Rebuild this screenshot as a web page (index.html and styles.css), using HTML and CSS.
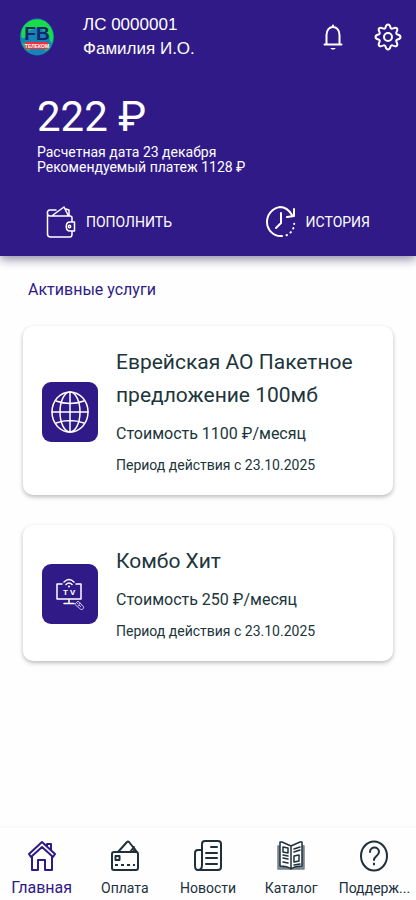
FILE: index.html
```html
<!DOCTYPE html>
<html lang="ru">
<head>
<meta charset="utf-8">
<meta name="viewport" content="width=device-width, initial-scale=1">
<title>Личный кабинет</title>
<link rel="stylesheet" href="styles.css">
</head>
<body>
<header class="header">
  <div class="topbar">
    <svg class="logo" viewBox="0 0 36 38" role="img" aria-label="ФБ Телеком">
      <ellipse cx="18" cy="19" rx="17" ry="18.500" fill="#1684b4"/>
      <path d="M8 5C13 0 25 0 30 7c5 7 5 13 3 18-3-1-2-6-4-9-4-1-5-6-9-7-4 0-5 3-9 3-2 4-4 9-8 8C1 15 3 9 8 5Z" fill="#16dd48"/>
      <path d="M3 25c5 0 7 3 8 8-4-1-7-4-8-8Zm22 8c1-3 4-4 7-5-1 3-4 5-7 5Z" fill="#28b66b"/>
      <text class="logo-letters" x="18" y="22" text-anchor="middle">FB</text>
      <rect x="6" y="24" width="23" height="7" rx="2" fill="#ef3038"/>
      <text class="logo-label" x="18" y="30" text-anchor="middle">ТЕЛЕКОМ</text>
    </svg>
    <div class="account">
      <div>ЛС 0000001</div>
      <div>Фамилия И.О.</div>
    </div>
    <button class="icon-button" type="button" aria-label="Уведомления">
      <svg class="bell" viewBox="2 0 20 28">
        <path d="M5.500 21V12c0-5 3-8 6.500-8s6.500 3 6.500 8v9M3.500 21.500h17M12 4V2.500"/>
        <path d="M9.500 25h5c-.5 2-4.500 2-5 0Z" fill="currentColor" stroke="none"/>
      </svg>
    </button>
    <button class="icon-button" type="button" aria-label="Настройки">
      <svg class="gear" viewBox="0 0 28 28">
        <path d="M11.500 4.500c1-4 4-4 5 0 .3 1.200 1.400 1.600 2.400 1 3.600-2 5.600 0 3.600 3.600-.6 1-.2 2.100 1 2.400 4 1 4 4 0 5-1.200.3-1.600 1.400-1 2.400 2 3.600 0 5.600-3.600 3.600-1-.6-2.100-.2-2.400 1-1 4-4 4-5 0-.3-1.200-1.400-1.600-2.400-1-3.600 2-5.600 0-3.600-3.600.6-1 .2-2.100-1-2.400-4-1-4-4 0-5 1.200-.3 1.600-1.400 1-2.400-2-3.600 0-5.600 3.600-3.600 1 .6 2.100.2 2.400-1Z"/>
        <circle cx="14" cy="14" r="4"/>
      </svg>
    </button>
  </div>
  <section class="balance">
    <div class="amount">222 ₽</div>
    <div>Расчетная дата 23 декабря</div>
    <div>Рекомендуемый платеж 1128 ₽</div>
  </section>
  <div class="actions">
    <button class="action" type="button">
      <svg class="wallet" viewBox="0 0 30 32">
        <path d="M26 16v-4c0-1-1-2-2-2H4C1 10 0 4 4 4h6M1.500 7v21c0 2 1 3 3 3H24c1 0 2-1 2-3v-3M7 9 18 1l4 8M20 3l3 1v5M28.500 16H24c-5 0-5 9 0 9h4.500Z"/>
        <circle cx="23.500" cy="20.500" r="1.200"/>
      </svg>
      ПОПОЛНИТЬ
    </button>
    <button class="action" type="button">
      <svg class="clock" viewBox="0 0 30 32">
        <path d="M16 30C8 31 1 24 1 16S7 2 14 1c5 0 9 3 12 8M28 3v7l-7 1M15 7v10l-5 5"/>
        <path d="M20.500 29.200l.5-.2M24.500 26.500l.4-.4M27.200 22.500l.2-.4M28.200 18v-.3"/>
      </svg>
      ИСТОРИЯ
    </button>
  </div>
</header>

<main class="content">
  <h1 class="section-title">Активные услуги</h1>
  <article class="card">
    <div class="tile">
      <svg class="globe" viewBox="0 0 38 42">
        <ellipse cx="19" cy="21" rx="18" ry="20"/>
        <ellipse cx="19" cy="21" rx="10" ry="20"/>
        <path d="M19 1v40M1 21h36M5 10q14 5 28 0M5 32q14-5 28 0"/>
      </svg>
    </div>
    <div class="details">
      <h2 class="name">Еврейская АО Пакетное предложение 100мб</h2>
      <p class="price">Стоимость 1100 ₽/месяц</p>
      <p class="period">Период действия с 23.10.2025</p>
    </div>
  </article>
  <article class="card">
    <div class="tile">
      <svg class="tv" viewBox="0 0 30 32">
        <path d="M7 6H2v15h24V6h-5M14 21v4M9 25.500h10"/>
        <path d="M9 4q5-5 10 0M11 6.500q3-3 6 0"/>
        <circle cx="14" cy="8.500" r="1" fill="currentColor" stroke="none"/>
        <text class="tv-label" x="10.500" y="17" text-anchor="middle">T</text>
        <text class="tv-label" x="17.500" y="17" text-anchor="middle">V</text>
        <g class="remote">
          <path d="m20 26 3-3 5 5c2 2-1 5-3 3Z"/>
          <path d="m23 25-1 1M25 27l-1 1M26 28l-1 1M25 25l-2 3"/>
        </g>
      </svg>
    </div>
    <div class="details">
      <h2 class="name">Комбо Хит</h2>
      <p class="price">Стоимость 250 ₽/месяц</p>
      <p class="period">Период действия с 23.10.2025</p>
    </div>
  </article>
</main>

<nav class="tabs">
  <a class="tab active" href="#" aria-current="page">
    <svg viewBox="0 0 28 32">
      <path d="M1 14 14 2l13 12-2 3L14 7 3 17ZM4 16v14h6V20h7v10h7V16M19 6V4h4v6"/>
    </svg>
    <span>Главная</span>
  </a>
  <a class="tab" href="#">
    <svg viewBox="0 0 28 32">
      <rect x="1" y="12" width="26" height="18" rx="2"/>
      <path d="M7 12 16 2q1-1 2 0l8 10M19 12l4-5M22 12l2-3"/>
      <rect x="4.500" y="16" width="4" height="4"/>
      <path class="card-digits" d="M4 25h3M10 25h3M16 25h3M22 25h2"/>
    </svg>
    <span>Оплата</span>
  </a>
  <a class="tab" href="#">
    <svg viewBox="0 0 28 32">
      <path d="M4 30c4 0 4-3 4-5V4c0-2 1-3 3-3h13c2 0 3 1 3 3v23c0 2-1 3-3 3H4M8 10H4c-2 0-3 1-3 3v13c0 3 1 4 3 4M17 7h6M12 13h11M12 18h11M12 24h11"/>
    </svg>
    <span>Новости</span>
  </a>
  <a class="tab catalog" href="#">
    <svg viewBox="0 0 28 32">
      <path class="book-cover" d="M1 6h3v21l10 2 10-2V6h3v23H1Z"/>
      <path d="M14 6 5 2H3v24q7 0 11 3 4-3 11-3V2h-2ZM14 6v23" fill="#fefefe"/>
      <path d="M6 7l5 1v5l-5-1ZM6 15l5 1M6 18l5 1M6 22l5 1M17 9l6-2M17 12l6-2M17 16l5-1v6l-5 1ZM17 25l6-1"/>
    </svg>
    <span>Каталог</span>
  </a>
  <a class="tab" href="#">
    <svg viewBox="0 0 28 32">
      <ellipse cx="14" cy="16" rx="13" ry="14.500"/>
      <path d="M10 12c0-6 9-6 9 0 0 4-5 4-5 8M14 23.500v1"/>
    </svg>
    <span>Поддерж...</span>
  </a>
</nav>
</body>
</html>
```

FILE: styles.css
```css
* {
  box-sizing: border-box;
}

body {
  display: flex;
  flex-direction: column;
  min-height: 100vh;
  margin: 0;
  background: #fefefe;
  color: #20353b;
  font-family: Roboto, sans-serif;
}

button {
  padding: 0;
  border: 0;
  background: none;
  color: inherit;
  font: inherit;
  cursor: pointer;
}

h1, h2, p {
  margin: 0;
  font-weight: 400;
}

svg {
  display: block;
  flex: none;
  fill: none;
  stroke: currentColor;
  stroke-width: 2;
  stroke-linecap: round;
  stroke-linejoin: round;
}

svg text {
  fill: currentColor;
  stroke: none;
}

.header {
  padding: 13px 14px 16px 19px;
  background: #2f1a87;
  color: #fff;
  box-shadow: 0 3px 10px #8884a0;
}

.topbar {
  display: flex;
  align-items: center;
}

.logo {
  width: 36px;
  height: 38px;
}

.logo .logo-letters {
  fill: #17246f;
  font: 700 19px "Liberation Sans", sans-serif;
}

.logo .logo-label {
  fill: #fff;
  font: 700 5px "Liberation Sans", sans-serif;
}

.logo ellipse,
.logo path,
.logo rect {
  stroke: none;
}

.account {
  flex: 1;
  margin-left: 28px;
  font: 17px/24px "Liberation Sans", sans-serif;
}

.icon-button {
  margin-left: 31px;
}

.bell {
  width: 20px;
  height: 28px;
}

.gear {
  width: 28px;
  height: 28px;
}

.balance {
  padding: 28px 18px 0;
  font-size: 14px;
  line-height: 15px;
}

.amount {
  margin-bottom: 1px;
  font-size: 42px;
  line-height: 55px;
}

.actions {
  display: flex;
  justify-content: space-between;
  padding: 29px 32px 0 27px;
}

.action {
  display: flex;
  align-items: center;
  gap: 10px;
  font-size: 14px;
  line-height: 36px;
}

.wallet,
.clock {
  width: 30px;
  height: 32px;
}

.wallet {
  stroke-width: 1.500;
}

.content {
  flex: 1;
  display: flex;
  flex-direction: column;
  gap: 30px;
  padding: 22px 23px 30px;
}

.section-title {
  margin-bottom: -6px;
  padding-left: 5px;
  color: #2f1a87;
  font-size: 16px;
  line-height: 24px;
}

.card {
  display: flex;
  align-items: center;
  gap: 18px;
  padding: 20px 18px 18px 19px;
  border-radius: 10px;
  background: #fff;
  box-shadow: 0 2px 4px #bbb;
}

.tile {
  display: grid;
  flex: none;
  place-items: center;
  width: 56px;
  height: 60px;
  border-radius: 9px;
  background: #2f1a87;
  color: #fff;
}

.globe {
  width: 38px;
  height: 42px;
  stroke-width: 1.500;
}

.tv {
  width: 30px;
  height: 32px;
  stroke-width: 1.500;
}

.tv .tv-label {
  font: 700 8px Roboto, sans-serif;
}

.remote {
  color: #c7b8ea;
  stroke-width: 1;
}

.name {
  font-size: 21px;
  line-height: 33px;
}

.price {
  margin-top: 8px;
  font-size: 16px;
  line-height: 27px;
}

.period {
  margin-top: 6px;
  font-size: 14px;
  line-height: 24px;
}

.tabs {
  position: sticky;
  bottom: 0;
  display: grid;
  grid-template-columns: repeat(5, 1fr);
  height: 72px;
  background: #fefefe;
  box-shadow: 0 -1px 2px #f8f8f8;
}

.tab {
  display: flex;
  flex-direction: column;
  align-items: center;
  gap: 5px;
  padding-top: 12px;
  color: #20303b;
  font-size: 14px;
  line-height: 22px;
  text-decoration: none;
  white-space: nowrap;
}

.tab svg {
  width: 28px;
  height: 32px;
}

.active {
  color: #2f1a87;
  font-size: 16px;
}

.catalog svg {
  stroke-width: 1.500;
}

.card-digits {
  stroke-linecap: butt;
}

.book-cover {
  fill: #879399;
  stroke: #71808a;
}
```
